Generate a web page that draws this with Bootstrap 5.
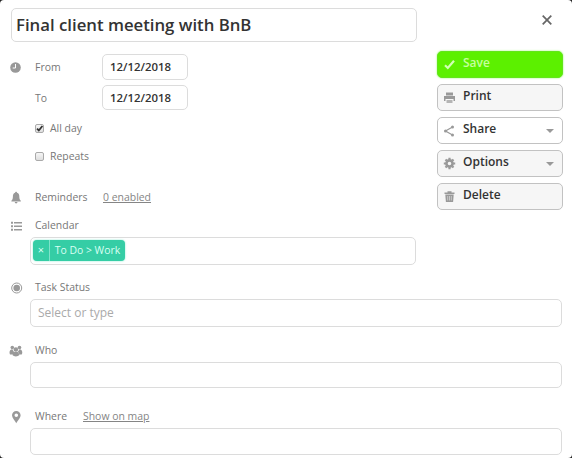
<!DOCTYPE html>
<html lang="en">
<head>
<meta charset="utf-8">
<meta name="viewport" content="width=device-width, initial-scale=1">
<title>Edit event</title>
<link href="https://cdn.jsdelivr.net/npm/bootstrap@5.3.0/dist/css/bootstrap.min.css" rel="stylesheet">
<style>
  body { background: #222; font-family: "Open Sans", sans-serif; font-size: 10.45px; line-height: 20px; color: #777; }
  .sheet { width: 572px; height: 458px; border-radius: 4px; padding: 8px 9px 0 0; }
  .main-col { width: 417px; height: 207px; padding-left: 11px; }
  .side-col { width: 126px; }
  .form-control { font-family: inherit; border-color: #dcdcdc; border-radius: 5px; color: #333; background: #fff; }
  .title-field { height: 34px; padding: 0 4px 1px; font-size: 16.75px; font-weight: 600; }
  .date-field { width: 86px; height: 26px; padding: 0 7px 1px; font-size: 11.4px; font-weight: 600; }
  .date-field.short { height: 25px; }
  .field-row { height: 20px; }
  .from-row { margin-top: 12px; }
  .to-row { margin-top: 5px; }
  .check-row { margin-top: 8px; }
  .reminder-row { margin-top: 21px; }
  .status-row { margin-top: 12px; }
  .who-row { margin-top: 13px; }
  .where-row { margin-top: 18px; }
  .glyph { width: 15px; height: 15px; fill: #999; flex: none; }
  .lead-cell { width: 35px; padding-left: 8px; flex: none; line-height: 0; }
  .main-col .lead-cell { width: 24px; margin-left: -3px; padding-left: 0; margin-right: 3px; }
  .name-cell { width: 68px; }
  .date-name { width: 67px; }
  .where-name { width: 48px; }
  .wide-field { margin: 2px 0 0 30px; width: 532px; height: 28px; padding: 0 7px 1px; font-size: 12px; }
  .who-field { height: 26px; }
  .where-field { height: 27px; }
  .wide-field::placeholder { color: #aaa; opacity: 1; }
  .tag-field { width: 386px; padding: 2px; }
  .tag { height: 21px; width: 92px; background: #35cda5; color: #d9fff3; border-radius: 4px; font-size: 10.4px; line-height: 20px; box-shadow: 0 0 2px #7de8cc; }
  .tag-x { width: 17px; border-right: 1px solid #7fe3ca; font-size: 11px; }
  .soft-link { color: #858585; text-underline-offset: 1px; }
  .tick { width: 9px; height: 9px; margin: 1px 6px 0 0; border: 1px solid #aaa; border-radius: 2px; background: linear-gradient(#f6f6f6, #dedede); line-height: 0; }
  .tick svg { overflow: visible; }
  .act { height: 27px; padding: 0 8px 0 5px; border: 1px solid #c2c2c2; border-radius: 5px; background: #f6f6f6; color: #333; font-size: 12px; font-weight: 600; line-height: 20px; }
  .act:hover { background: #eee; border-color: #bbb; color: #333; }
  .act .glyph { width: 13px; height: 13px; margin-right: 7px; }
  .act .act-name { margin-top: -4px; }
  .act-save, .act-save:hover { background: #5cf000; border-color: #62e51b; color: #c6ff9e; box-shadow: 0 0 2px #8df65a; }
  .act-save .glyph { fill: none; stroke: #d2ffb5; }
  .caret { width: 0; height: 0; border: 4px solid transparent; border-top: 4px solid #999; border-bottom: 0; }
  .close-x { width: 10px; height: 10px; margin: 7px 11px 26px 0; }
</style>
<script src="https://cdn.jsdelivr.net/npm/bootstrap@5.3.0/dist/js/bootstrap.bundle.min.js"></script>
</head>
<body class="m-0 overflow-hidden">
<form class="sheet bg-white">
  <div class="d-flex justify-content-between">
    <div class="main-col">
      <input class="form-control title-field" value="Final client meeting with BnB" aria-label="Title">
      <div class="d-flex align-items-center from-row">
        <span class="lead-cell"><svg class="glyph" viewBox="0 0 15 15"><circle cx="7.500" cy="7.500" r="5.300"/><path d="M7.500 4v4H4.700" fill="none" stroke="#fff"/></svg></span>
        <span class="date-name">From</span>
        <input class="form-control date-field" value="12/12/2018" aria-label="From">
      </div>
      <div class="d-flex align-items-center to-row">
        <span class="lead-cell"></span>
        <span class="date-name">To</span>
        <input class="form-control date-field short" value="12/12/2018" aria-label="To">
      </div>
      <div class="d-flex align-items-center field-row check-row">
        <span class="lead-cell"></span>
        <span class="tick"><svg width="7" height="7" viewBox="0 0 7 7"><path d="M1 3.700 2.800 5.500 6.400 1" fill="none" stroke="#333" stroke-width="1.800"/></svg></span>All day
      </div>
      <div class="d-flex align-items-center field-row check-row">
        <span class="lead-cell"></span>
        <span class="tick"></span>Repeats
      </div>
      <div class="d-flex align-items-center field-row reminder-row">
        <span class="lead-cell"><svg class="glyph" viewBox="0 0 15 15"><path d="M8 1.800c.7 0 1 .4 1 1 1.900.5 2.300 2 2.300 3.700 0 2.500.6 3.300 1.500 4.200v.8H3.400v-.8c.9-.9 1.500-1.700 1.500-4.200C4.900 4.800 5.300 3.300 7.100 2.800c0-.6.3-1 .9-1zM6.700 12h2.800a1.400 1.400 0 0 1-2.800 0z"/></svg></span>
        <span class="name-cell">Reminders</span>
        <a href="#" class="soft-link">0 enabled</a>
      </div>
    </div>
    <div class="side-col d-flex flex-column">
      <svg class="close-x align-self-end" viewBox="0 0 10 10"><path d="M.7.7l8.600 8.600M9.300.7.7 9.300" stroke="#666" stroke-width="1.700"/></svg>
      <div class="d-flex flex-column" style="gap:6px">
        <button type="button" class="btn act act-save d-flex align-items-center"><svg class="glyph" viewBox="0 0 13 13"><path d="M2 7.300 4.800 10 11 2.800" stroke-width="2.200"/></svg><span class="act-name">Save</span></button>
        <button type="button" class="btn act d-flex align-items-center"><svg class="glyph" viewBox="0 0 13 13"><path d="M3 1.500h7v3H3zM1 5h11v5h-1.500V8h-8v2H1z"/><path d="M3.500 9h6v3h-6z" fill="#b5b5b5"/></svg><span class="act-name">Print</span></button>
        <button type="button" class="btn act d-flex align-items-center bg-white"><svg class="glyph" viewBox="0 0 13 13"><path d="M9.500 3 2.500 7l7 4" fill="none" stroke="#999" stroke-width="1.200"/><circle cx="9.500" cy="3" r="1.500"/><circle cx="2.500" cy="7" r="1.500"/><circle cx="9.500" cy="11" r="1.500"/></svg><span class="act-name">Share</span><span class="caret ms-auto"></span></button>
        <button type="button" class="btn act d-flex align-items-center"><svg class="glyph" viewBox="0 0 13 13"><circle cx="6.500" cy="6.500" r="3.100" fill="none" stroke="#999" stroke-width="2.600"/><path d="M6.500.8v2M6.500 10.200v2M.8 6.500h2M10.200 6.500h2M2.500 2.500l1.300 1.300M9.200 9.200l1.300 1.300M2.500 10.500l1.300-1.300M9.200 3.800l1.300-1.300" stroke="#999" stroke-width="2.200"/></svg><span class="act-name">Options</span><span class="caret ms-auto"></span></button>
        <button type="button" class="btn act d-flex align-items-center"><svg class="glyph" viewBox="0 0 13 13"><path d="M1.500 2.500H4.500V1.300h4v1.200h3V4h-10zM2.300 4.500h8.400l-.6 7.500H2.900z"/><path d="M4.700 6v4.500M6.500 6v4.500M8.300 6v4.500" stroke="#ddd" stroke-width=".7"/></svg><span class="act-name">Delete</span></button>
      </div>
    </div>
  </div>
  <div class="d-flex align-items-center field-row">
    <span class="lead-cell"><svg class="glyph" viewBox="0 0 15 15"><path d="M3 3.800h2v2H3zM3 7.300h2v2H3zM3 10.800h2v2H3zM6 4h8v1.600H6zM6 7.500h8v1.600H6zM6 11h8v1.600H6z"/></svg></span>Calendar
  </div>
  <div class="form-control wide-field tag-field">
    <div class="tag d-flex"><span class="tag-x text-center">×</span><span class="flex-fill text-center text-nowrap">To Do &gt; Work</span></div>
  </div>
  <div class="d-flex align-items-center field-row status-row">
    <span class="lead-cell"><svg class="glyph" viewBox="0 0 15 15"><circle cx="8.700" cy="8" r="5" fill="none" stroke="#999"/><circle cx="8.700" cy="8" r="3.300"/></svg></span>Task Status
  </div>
  <input class="form-control wide-field" placeholder="Select or type" aria-label="Task Status">
  <div class="d-flex align-items-center field-row who-row">
    <span class="lead-cell"><svg class="glyph" viewBox="0 0 15 15"><circle cx="4.300" cy="4.500" r="1.800"/><circle cx="11.500" cy="4.500" r="1.800"/><circle cx="7.900" cy="6.500" r="2.300"/><path d="M1.500 10c0-2.500 1-3.700 2.800-3.700L6 9l-2 2.500H2zM14.300 10c0-2.500-1-3.700-2.800-3.700L9.700 9l2 2.500h2zM4.400 12c0-2.300 1.200-3.300 3.500-3.300s3.500 1 3.500 3.300c-1.400 1.900-5.600 1.900-7 0z"/></svg></span>Who
  </div>
  <input class="form-control wide-field who-field" aria-label="Who">
  <div class="d-flex align-items-center field-row where-row">
    <span class="lead-cell"><svg class="glyph" viewBox="0 0 15 15"><path fill-rule="evenodd" d="M8.300 2a4.300 4.300 0 0 1 4.300 4.300c0 3-2.900 5-4.300 8-1.400-3-4.300-5-4.300-8a4.300 4.300 0 0 1 4.300-4.300zm0 2.500a1.800 1.800 0 1 0 0 3.600 1.800 1.800 0 0 0 0-3.600z"/></svg></span>
    <span class="where-name">Where</span><a href="#" class="soft-link">Show on map</a>
  </div>
  <input class="form-control wide-field where-field" aria-label="Where">
</form>
</body>
</html>
